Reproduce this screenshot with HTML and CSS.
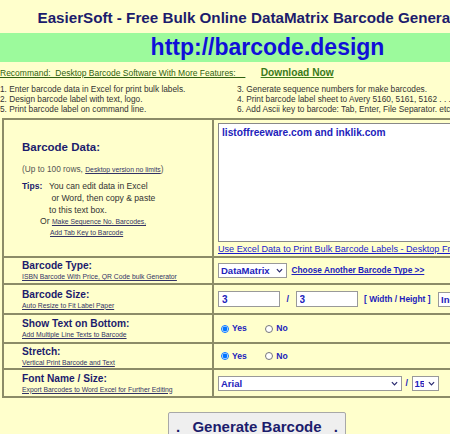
FILE: index.html
```html
<!DOCTYPE html>
<html lang="en">
<head>
  <meta charset="UTF-8" />
  <meta name="viewport" content="width=device-width, initial-scale=1.0"/>
  <title>Free Bulk Online DataMatrix Barcode Generator</title>
<link rel="stylesheet" href="styles.css">
</head>
<body>
  <div class="page">
    <h1 class="title">EasierSoft - Free Bulk Online DataMatrix Barcode Generator</h1>

    <div class="site-band">
      <a href="#" class="site-link">http://barcode.design</a>
    </div>

    <div class="recommend">
      <a href="#" class="rec-link">Recommand:&nbsp; Desktop Barcode Software With More Features: &nbsp;_</a>
      <a href="#" class="download">Download Now</a>
    </div>

    <!-- desktop features, two columns -->
    <div class="features">
      <div class="features-col">
        <div>1. Enter barcode data in Excel for print bulk labels.</div>
        <div>2. Design barcode label with text, logo.</div>
        <div>5. Print barcode label on command line.</div>
      </div>
      <div class="features-col">
        <div>3. Generate sequence numbers for make barcodes.</div>
        <div>4. Print barcode label sheet to Avery 5160, 5161, 5162 . . .</div>
        <div>6. Add Ascii key to barcode: Tab, Enter, File Separator. etc.</div>
      </div>
    </div>

    <table class="form">
      <tr class="row-data">
        <td class="label-cell data-label">
          <div class="data-title">Barcode Data:</div>
          <div class="rows-note">(Up to 100 rows, <a href="#" class="small-link">Desktop version no limits</a>)</div>
          <div class="tips">
            <span class="tips-head">Tips:</span>
            <span class="tips-text">You can edit data in Excel<br>&nbsp;or Word, then copy &amp; paste<br>to this text box.</span>
          </div>
          <div class="or-links">
            Or <a href="#" class="small-link">Make Sequence No. Barcodes,</a><br>
            <a href="#" class="small-link or-second">Add Tab Key to Barcode</a>
          </div>
        </td>
        <td class="value-cell data-value">
          <textarea class="data-box">listoffreeware.com and inklik.com</textarea>
          <a href="#" class="excel-link">Use Excel Data to Print Bulk Barcode Labels - Desktop Free Version</a>
        </td>
      </tr>
      <tr class="row-type">
        <td class="label-cell">
          <div class="field-title">Barcode Type:</div>
          <a href="#" class="sub-link">ISBN Barcode With Price, QR Code bulk Generator</a>
        </td>
        <td class="value-cell">
          <span class="select-wrap">
            <select class="field-select type-select">
              <option>DataMatrix</option>
            </select>
            <svg class="chevron" viewBox="0 0 8 5"><path d="M1 1l3 3 3-3"/></svg>
          </span>
          <a href="#" class="type-link">Choose Another Barcode Type &gt;&gt;</a>
        </td>
      </tr>
      <tr class="row-size">
        <td class="label-cell">
          <div class="field-title">Barcode Size:</div>
          <a href="#" class="sub-link">Auto Resize to Fit Label Paper</a>
        </td>
        <td class="value-cell">
          <input type="text" class="size-input" value="3">
          <span class="slash">/</span>
          <input type="text" class="size-input" value="3">
          <span class="size-note">[ Width / Height ]</span>
          <span class="select-wrap">
            <select class="field-select unit-select">
              <option>Inch</option>
            </select>
            <svg class="chevron" viewBox="0 0 8 5"><path d="M1 1l3 3 3-3"/></svg>
          </span>
        </td>
      </tr>
      <tr class="row-text">
        <td class="label-cell">
          <div class="field-title">Show Text on Bottom:</div>
          <a href="#" class="sub-link">Add Multiple Line Texts to Barcode</a>
        </td>
        <td class="value-cell">
          <label class="choice"><input type="radio" name="showtext" checked> Yes</label>
          <label class="choice"><input type="radio" name="showtext"> No</label>
        </td>
      </tr>
      <tr class="row-stretch">
        <td class="label-cell">
          <div class="field-title">Stretch:</div>
          <a href="#" class="sub-link">Vertical Print Barcode and Text</a>
        </td>
        <td class="value-cell">
          <label class="choice"><input type="radio" name="stretch" checked> Yes</label>
          <label class="choice"><input type="radio" name="stretch"> No</label>
        </td>
      </tr>
      <tr class="row-font">
        <td class="label-cell">
          <div class="field-title">Font Name / Size:</div>
          <a href="#" class="sub-link">Export Barcodes to Word Excel for Further Editing</a>
        </td>
        <td class="value-cell">
          <span class="select-wrap">
            <select class="field-select font-name">
              <option>Arial</option>
            </select>
            <svg class="chevron" viewBox="0 0 8 5"><path d="M1 1l3 3 3-3"/></svg>
          </span>
          <span class="slash slash-tight">/</span>
          <span class="select-wrap">
            <select class="field-select font-size">
              <option>15</option>
            </select>
            <svg class="chevron" viewBox="0 0 8 5"><path d="M1 1l3 3 3-3"/></svg>
          </span>
        </td>
      </tr>
    </table>

    <div class="actions">
      <button class="generate"><span>.</span><span>Generate Barcode</span><span>.</span></button>
    </div>
  </div>
</body>
</html>
```

FILE: styles.css
```css
html {
  overflow: hidden;
}

body {
  margin: 0;
  padding: 0;
  font-family: "Liberation Sans", Arial, sans-serif;
  background-color: #ffffcc;
}

.page {
  width: 535px;
}

.title {
  margin: 0;
  padding: 9px 27px 0 0;
  height: 24px;
  font-size: 15.2px;
  font-weight: bold;
  color: #1c1c6c;
  text-align: center;
  white-space: nowrap;
}

.site-band {
  background-color: #9cfa9c;
  height: 29px;
  line-height: 29px;
  text-align: center;
}

.site-link {
  font-size: 23px;
  font-weight: bold;
  color: #1010d8;
  text-decoration: none;
}

.recommend {
  height: 18px;
  line-height: 18px;
  white-space: nowrap;
}

.rec-link {
  font-size: 8.5px;
  color: #2f5f10;
}

.download {
  margin-left: 11px;
  font-size: 10.2px;
  font-weight: bold;
  color: #3a7a1a;
}

.features {
  display: grid;
  grid-template-columns: 237px 1fr;
  padding-top: 4px;
  height: 33px;
  font-size: 8.3px;
  line-height: 10px;
  color: #333;
  white-space: nowrap;
}

/* main form table */
.form {
  margin: 1px 0 0 2px;
  width: 533px;
  table-layout: fixed;
  border-collapse: collapse;
  border: 2px solid #8c8c68;
}

.form td {
  box-sizing: border-box;
  border: 2px solid #8c8c68;
  padding: 0;
  vertical-align: middle;
  font-size: 9px;
  line-height: 1;
}

.label-cell {
  width: 210px;
  padding-left: 18px !important;
}

.value-cell {
  padding-left: 4px !important;
  white-space: nowrap;
  overflow: hidden;
}

.data-label {
  vertical-align: top !important;
  padding-top: 20px !important;
}

.data-title {
  font-size: 11.5px;
  font-weight: bold;
  color: #1c1c6c;
  line-height: 14px;
  margin-bottom: 10px;
}

.rows-note {
  font-size: 8.3px;
  line-height: 11px;
  color: #555;
  margin-bottom: 5px;
}

.small-link {
  font-size: 6.8px;
  color: #333366;
}

.tips {
  display: flex;
  font-size: 8.6px;
  line-height: 12px;
  color: #333;
}

.tips-head {
  font-weight: bold;
  color: #1c1c6c;
  width: 27px;
}

.or-links {
  padding-left: 18px;
  font-size: 8.6px;
  line-height: 11px;
  color: #333;
}

.or-second {
  margin-left: 10px;
}

.data-value {
  vertical-align: top !important;
  padding-top: 3px !important;
}

.data-box {
  display: block;
  box-sizing: border-box;
  width: 330px;
  height: 119px;
  margin: 0 0 2px 0;
  padding: 3px 3px;
  resize: none;
  border: 1px solid #888;
  background: #fff;
  font-family: inherit;
  font-size: 10.2px;
  font-weight: bold;
  color: #2222bb;
}

.excel-link {
  font-size: 9.1px;
  line-height: 11px;
  color: #1a1acc;
}

.row-data td {
  height: 138px;
}

.row-type td {
  height: 27px;
}

.row-size td {
  height: 30px;
}

.row-text td {
  height: 29px;
}

.row-stretch td {
  height: 26px;
}

.row-font td {
  height: 28px;
}

.field-title {
  font-size: 10.2px;
  font-weight: bold;
  color: #1c1c6c;
  line-height: 13px;
}

.sub-link {
  display: block;
  font-size: 6.8px;
  color: #333366;
  line-height: 10px;
}

/* selects drawn flat, with a small chevron on top */
.select-wrap {
  position: relative;
  display: inline-block;
  vertical-align: middle;
}

.field-select {
  appearance: none;
  display: block;
  box-sizing: border-box;
  height: 15px;
  padding: 0 14px 0 2px;
  font-family: inherit;
  font-size: 9.5px;
  font-weight: bold;
  color: #2222bb;
  background: #fff;
  border: 1px solid #999;
  border-radius: 0;
}

.chevron {
  position: absolute;
  right: 4px;
  top: 5px;
  width: 7px;
  height: 5px;
  fill: none;
  stroke: #2a2a70;
  stroke-width: 1.4;
  pointer-events: none;
}

.type-select {
  width: 69px;
}

.unit-select {
  width: 40px;
}

.font-name {
  width: 184px;
}

.font-size {
  width: 27px;
}

.type-link {
  margin-left: 2px;
  font-size: 8.3px;
  font-weight: bold;
  color: #2222bb;
  vertical-align: middle;
}

.size-input {
  box-sizing: border-box;
  width: 62px;
  height: 16px;
  padding: 0 3px;
  border: 1px solid #999;
  font-family: inherit;
  font-size: 10px;
  font-weight: bold;
  color: #2222bb;
  vertical-align: middle;
}

.slash {
  margin: 0 4px;
  font-size: 9px;
  font-weight: bold;
  color: #2222bb;
  vertical-align: middle;
}

.slash-tight {
  margin: 0 1px 0 1px;
}

.size-note {
  margin: 0 5px 0 4px;
  font-size: 8.4px;
  font-weight: bold;
  color: #2222bb;
  vertical-align: middle;
}

.choice {
  display: inline-flex;
  align-items: center;
  gap: 3px;
  margin-left: 3px;
  margin-right: 13px;
  font-size: 8.6px;
  font-weight: bold;
  color: #2222bb;
  vertical-align: middle;
}

.choice input {
  width: 8px;
  height: 8px;
  margin: 0;
}

.actions {
  padding-top: 14px;
  padding-left: 168px;
}

.generate {
  display: flex;
  justify-content: space-between;
  align-items: center;
  box-sizing: border-box;
  width: 178px;
  height: 28px;
  padding: 0 7px;
  background-color: #efefef;
  border: 1px solid #a8a8a8;
  border-radius: 2px;
  font-family: inherit;
  font-size: 15px;
  font-weight: bold;
  color: #1c1c6c;
  white-space: nowrap;
}
```
